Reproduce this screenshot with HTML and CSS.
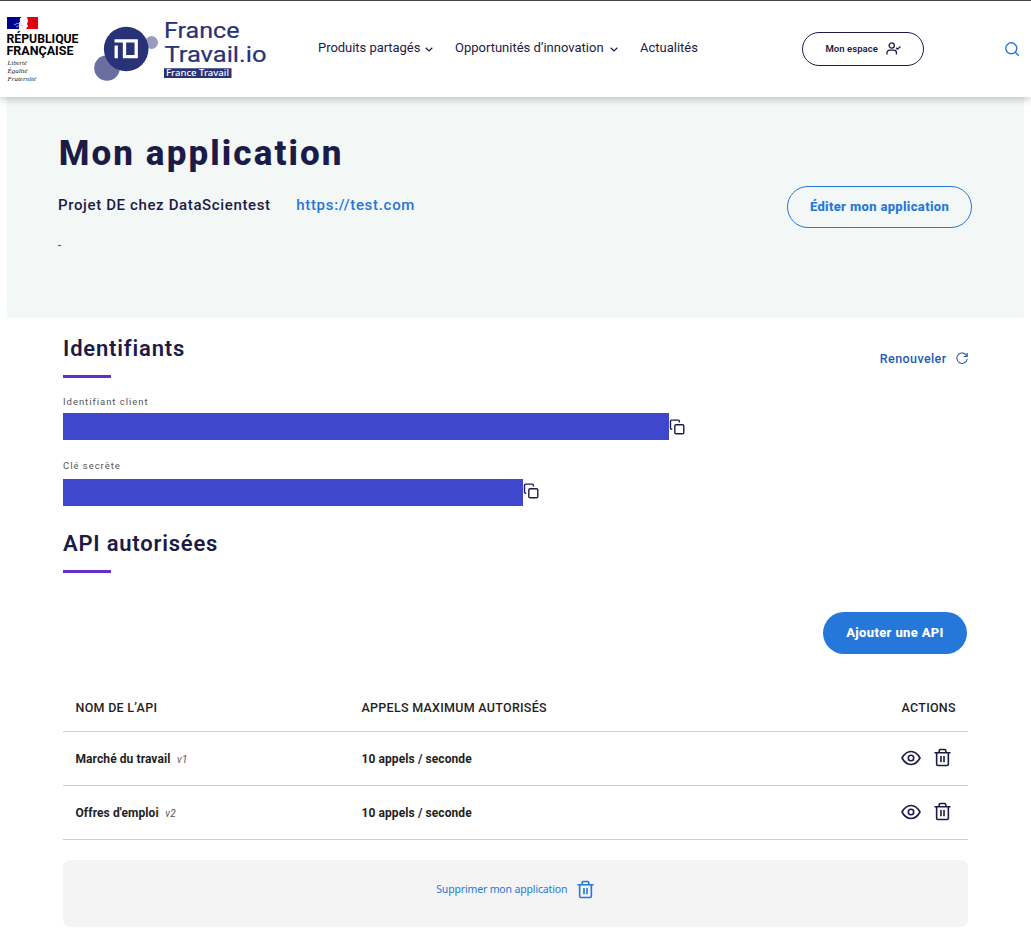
FILE: index.html
```
<!DOCTYPE html>
<html lang="fr">
<head>
<meta charset="utf-8">
<title>Mon application - France Travail.io</title>
<link rel="stylesheet" href="styles.css">
</head>
<body>
<svg class="sprite" aria-hidden="true">
  <symbol id="chevron" viewBox="0 0 8 5"><path d="M.7.8 4 4 7.3.8" fill="none" stroke="currentColor" stroke-width="1.2"/></symbol>
  <symbol id="copy" viewBox="0 0 16 16"><g fill="none" stroke="currentColor" stroke-width="1.4"><rect x="5.800" y="5.800" width="9" height="9" rx="1.300"/><path d="M3.300 10.200h-.6A1.200 1.200 0 0 1 1.500 9V2.300A1.200 1.200 0 0 1 2.700 1.100h6.500A1.200 1.200 0 0 1 10.400 2.300v1.200"/></g></symbol>
  <symbol id="eye" viewBox="0 0 20 16"><g fill="none" stroke="currentColor" stroke-width="1.6"><path d="M1 8C3.200 4 6.300 1.500 10 1.500S16.800 4 19 8c-2.200 4-5.300 6.500-9 6.500S3.200 12 1 8z" stroke-linejoin="round"/><circle cx="10" cy="8" r="2.700"/></g></symbol>
  <symbol id="trash" viewBox="0 0 18 20"><g fill="none" stroke="currentColor" stroke-width="1.700"><path d="M.5 5h17M2.800 5v12.200a1.300 1.300 0 0 0 1.300 1.300h9.800a1.300 1.300 0 0 0 1.300-1.300V5M5.500 5V2.800a1.300 1.300 0 0 1 1.300-1.300h4.400a1.300 1.300 0 0 1 1.300 1.300V5M7.400 8.500v6.500M10.600 8.500v6.500"/></g></symbol>
</svg>

<header class="header">
  <svg class="logo" width="270" height="96" viewBox="0 1 270 96" role="img" aria-label="République Française, France Travail.io">
    <path d="M7 17h12v12H7z" fill="#000091"/>
    <path d="M19 17h9v12h-9z" fill="#fff"/>
    <path d="M27 17h11v12H26l2-3-1-2 1-3z" fill="#e1000f"/>
    <path d="M14 25l3-1.500 4-.5M16 27l4-2 3 1" fill="none" stroke="#aebdee" stroke-width=".8"/>
    <path d="M19 17h3c-3 1-2 3-2 5l-2 1z" fill="#000091"/>
    <g class="republic">
      <text x="6.500" y="42.500" textLength="72" lengthAdjust="spacingAndGlyphs">RÉPUBLIQUE</text>
      <text x="6.500" y="54.700" textLength="67" lengthAdjust="spacingAndGlyphs">FRANÇAISE</text>
    </g>
    <g class="motto">
      <text x="7.500" y="65" textLength="19.500" lengthAdjust="spacingAndGlyphs">Liberté</text>
      <text x="7.500" y="72.800" textLength="20" lengthAdjust="spacingAndGlyphs">Égalité</text>
      <text x="7.500" y="80.500" textLength="28.500" lengthAdjust="spacingAndGlyphs">Fraternité</text>
    </g>
    <circle cx="151.500" cy="42.500" r="6.500" fill="#979bc0"/>
    <circle cx="107" cy="68" r="12.800" fill="#696e9f"/>
    <circle cx="126.200" cy="49" r="22.300" fill="#283276"/>
    <path d="M116.200 45.500V58.300M114.500 40.800h21.700v15.900h-11.700V42" fill="none" stroke="#fff" stroke-width="3.300"/>
    <g class="brand">
      <text x="164" y="38" textLength="75.500" lengthAdjust="spacingAndGlyphs">France</text>
      <text x="164.500" y="62" textLength="102" lengthAdjust="spacingAndGlyphs">Travail.io</text>
    </g>
    <path d="M164 68.300h67.500v9.700H164z" fill="#283276"/>
    <text class="brand-sub" x="166" y="76.200" textLength="63" lengthAdjust="spacingAndGlyphs">France Travail</text>
  </svg>
  <nav class="nav">
    <a class="nav-item nav-products">Produits partagés<svg class="chevron"><use href="#chevron"/></svg></a>
    <a class="nav-item nav-innovation">Opportunités d’innovation<svg class="chevron"><use href="#chevron"/></svg></a>
    <a class="nav-item nav-news">Actualités</a>
  </nav>
  <a class="account"><span>Mon espace</span>
    <svg width="15" height="13" viewBox="0 0 15 13"><g fill="none" stroke="currentColor" stroke-width="1.300"><circle cx="5.700" cy="3.500" r="2.600"/><path d="M1 12.400v-1.600a2.600 2.600 0 0 1 2.600-2.600h4.200a2.600 2.600 0 0 1 2.600 2.600v1.600M10 5.700l1.500 1.500L14.500 4.500"/></g></svg>
  </a>
  <svg class="search" width="15" height="15" viewBox="0 0 15 15"><g fill="none" stroke="currentColor" stroke-width="1.400"><circle cx="6.300" cy="6.300" r="5.500"/><path d="m10.300 10.300 3.500 3.500"/></g></svg>
</header>

<section class="hero">
  <h1 class="title">Mon application</h1>
  <div class="hero-row">
    <div class="project"><span class="project-name">Projet DE chez DataScientest</span><a class="project-url">https://test.com</a></div>
    <a class="button button-outline">Éditer mon application</a>
  </div>
  <p class="description">-</p>
</section>

<main class="content">
  <div class="section-head">
    <h2 class="heading heading-ids">Identifiants</h2>
    <a class="renew"><span>Renouveler</span><svg width="12" height="12" viewBox="0 0 12 12"><path d="M10.900 4.300A5.200 5.200 0 1 0 11.200 7M11.200 1v3.500H7.900" fill="none" stroke="currentColor" stroke-width="1.100"/></svg></a>
  </div>
  <div class="label label-id">Identifiant client</div>
  <div class="secret"><div class="mask mask-id"></div><svg class="copy"><use href="#copy"/></svg></div>
  <div class="label label-key">Clé secrète</div>
  <div class="secret"><div class="mask mask-key"></div><svg class="copy copy-key"><use href="#copy"/></svg></div>

  <h2 class="heading heading-api">API autorisées</h2>
  <div class="add-row"><a class="button button-primary">Ajouter une API</a></div>

  <div class="table">
    <div class="row row-head"><span class="th-name">NOM DE L’API</span><span class="th-calls">APPELS MAXIMUM AUTORISÉS</span><span class="th-actions">ACTIONS</span></div>
    <div class="row"><span><b class="market">Marché du travail</b><i>v1</i></span><b class="calls">10 appels / seconde</b><span class="actions"><svg class="eye"><use href="#eye"/></svg><svg class="trash"><use href="#trash"/></svg></span></div>
    <div class="row"><span><b class="offers">Offres d'emploi</b><i>v2</i></span><b class="calls">10 appels / seconde</b><span class="actions"><svg class="eye"><use href="#eye"/></svg><svg class="trash"><use href="#trash"/></svg></span></div>
  </div>

  <div class="delete"><span>Supprimer mon application</span><svg class="trash"><use href="#trash"/></svg></div>
</main>
</body>
</html>
```
FILE: styles.css
```
* { box-sizing: border-box; }
body { margin: 0; height: 933px; overflow: hidden; background: #fff; color: #1b1b47; font-family: Roboto, sans-serif; }
h1, h2, p { margin: 0; }
svg { flex: none; }
.sprite { display: none; }

.header { position: relative; z-index: 1; display: flex; align-items: flex-start; height: 97px; border-top: 1px solid #444; background: #fff; box-shadow: 0 2px 8px rgba(0, 0, 0, .24); }
.logo { display: block; }
.republic { font: 700 12px Roboto, sans-serif; fill: #000; }
.motto { font: italic 7px "Liberation Serif", serif; fill: #222; }
.brand { font: 400 22px Roboto, sans-serif; fill: #283276; stroke: #283276; stroke-width: .2px; }
.brand-sub { font: 500 9px "Noto Sans", sans-serif; fill: #fff; }

.nav { display: flex; width: 532px; padding: 37px 0 0 48px; font-size: 13px; line-height: 20px; white-space: nowrap; }
.nav-item { display: flex; align-items: center; }
.nav-products { width: 137px; letter-spacing: -.04px; }
.nav-innovation { width: 185px; }
.chevron { width: 8px; height: 5px; margin: 3px 0 0 6px; }
.nav-products .chevron { margin-left: 5px; }
.account { display: flex; align-items: center; gap: 8px; width: 122px; height: 34px; margin-top: 31px; padding: 0 0 1px 22.500px; border: 1px solid #1b1b47; border-radius: 17px; font-size: 9.500px; font-weight: 600; letter-spacing: .05px; white-space: nowrap; }
.search { margin: 41px 0 0 81px; color: #2577da; }

.hero { height: 221px; margin: 0 7px; padding: 35px 52px 0 51px; background: #f3f7f6; }
.title { font-size: 35px; line-height: 44px; font-weight: 800; letter-spacing: 2.100px; text-indent: .7px; white-space: nowrap; }
.hero-row { display: flex; justify-content: space-between; align-items: flex-start; height: 60px; margin-top: 10px; }
.project { display: flex; gap: 25.500px; padding-top: 9px; font-size: 15px; line-height: 20px; font-weight: 500; letter-spacing: .63px; white-space: nowrap; }
.project-url { color: #2577da; letter-spacing: .7px; }
.button { display: flex; align-items: center; justify-content: center; height: 42px; padding-bottom: 2px; border-radius: 21px; font-size: 13px; font-weight: 800; letter-spacing: .35px; white-space: nowrap; }
.button-outline { width: 185px; border: 1px solid #2577da; color: #2577da; }
.button-primary { width: 144px; background: #2577da; color: #fff; }
.description { margin-top: -10px; font-size: 11px; line-height: 20px; color: #222; }

.content { width: 905px; margin-left: 63px; }
.section-head { display: flex; justify-content: space-between; height: 77px; padding-top: 17px; }
.heading { font-size: 22px; line-height: 28px; font-weight: 600; letter-spacing: .82px; white-space: nowrap; }
.heading::after { content: ""; display: block; width: 48px; height: 3px; margin-top: 12px; background: #672dcb; }
.renew { display: flex; align-items: center; gap: 9px; height: 20px; margin: 13px .5px 0 0; color: #235bb8; font-size: 12.500px; font-weight: 500; letter-spacing: .4px; }
.label { height: 18px; font-size: 9.500px; line-height: 14px; letter-spacing: .97px; color: #555; }
.label-key { height: 20px; margin-top: 19px; }
.secret { display: flex; height: 27px; }
.mask { height: 27px; background: #3f47cc; }
.mask-id { width: 606px; }
.mask-key { width: 460px; }
.copy { width: 16px; height: 16px; margin: 6px 0 0 0; }
.copy-key { margin-top: 4px; }
.heading-api { margin-top: 24px; letter-spacing: .78px; }
.add-row { display: flex; justify-content: flex-end; margin-top: 39px; padding-right: 1px; }

.table { margin-top: 29px; color: #1e1e1e; }
.row { display: grid; grid-template-columns: 286px 1fr 67px; align-items: center; height: 54px; padding-left: 12.500px; border-bottom: 1px solid #d0d0d0; font-size: 12px; white-space: nowrap; }
.row-head { height: 49px; font-size: 12.500px; font-weight: 500; letter-spacing: .28px; }
.row i { margin-left: 6.500px; font-size: 10px; letter-spacing: .4px; color: #555; }
.row b { letter-spacing: .09px; }
.actions { display: flex; align-items: center; gap: 13px; margin-left: -.5px; padding-bottom: 2px; color: #1b1b47; }
.th-actions { padding-left: .5px; }
.eye { width: 20px; height: 16px; }
.trash { width: 17px; height: 19px; }
.delete { display: flex; justify-content: center; align-items: flex-start; gap: 9.500px; height: 67px; margin-top: 20px; padding: 20px 1px 0 0; border-radius: 8px; background: #f4f4f4; color: #2577da; font: 10.500px/18px "Noto Sans", sans-serif; letter-spacing: -.15px; }
```
